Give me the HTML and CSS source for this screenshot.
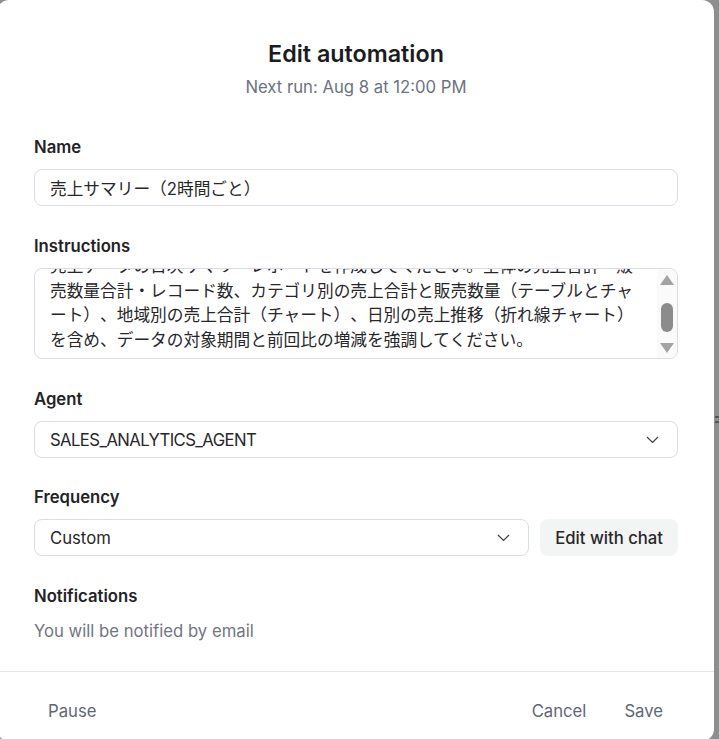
FILE: index.html
```html
<!DOCTYPE html>
<html lang="ja">
<head>
    <meta charset="UTF-8">
    <meta name="viewport" content="width=device-width, initial-scale=1.0">
    <title>Edit automation</title>
    <link rel="stylesheet" href="styles.css">
</head>
<body>
    <div class="modal">
        <div class="modal-body">
            <div class="modal-header">
                <h2 class="title">Edit automation</h2>
                <p class="subtitle">Next run: Aug 8 at 12:00 PM</p>
            </div>

            <div class="field">
                <label class="field-label" for="name">Name</label>
                <input class="text-input" id="name" type="text" value="売上サマリー（2時間ごと）">
            </div>

            <!-- Инструкции: текст прокручен, скроллбар рисуем сами -->
            <div class="field">
                <label class="field-label">Instructions</label>
                <div class="textarea">
                    <div class="textarea-text">売上データの日次サマリーレポートを作成してください。全体の売上合計・販売数量合計・レコード数、カテゴリ別の売上合計と販売数量（テーブルとチャート）、地域別の売上合計（チャート）、日別の売上推移（折れ線チャート）を含め、データの対象期間と前回比の増減を強調してください。</div>
                    <div class="scrollbar">
                        <svg class="arrow" width="14" height="10" viewBox="0 0 14 10"><path d="M7 0 L14 10 L0 10 Z" fill="#a3a3a3"/></svg>
                        <div class="thumb"></div>
                        <svg class="arrow" width="14" height="10" viewBox="0 0 14 10"><path d="M0 0 L14 0 L7 10 Z" fill="#a3a3a3"/></svg>
                    </div>
                </div>
            </div>

            <div class="field field-tight">
                <label class="field-label">Agent</label>
                <div class="select">
                    <span class="caps">SALES_ANALYTICS_AGENT</span>
                    <svg width="13" height="8" viewBox="0 0 13 8"><path d="M1 1 L6.5 6.5 L12 1" fill="none" stroke="#3f3f46" stroke-width="1.2"/></svg>
                </div>
            </div>

            <div class="field">
                <label class="field-label">Frequency</label>
                <div class="row">
                    <div class="select grow">
                        <span>Custom</span>
                        <svg width="13" height="8" viewBox="0 0 13 8"><path d="M1 1 L6.5 6.5 L12 1" fill="none" stroke="#3f3f46" stroke-width="1.2"/></svg>
                    </div>
                    <button class="chat-btn">Edit with chat</button>
                </div>
            </div>

            <div class="field">
                <label class="field-label label-wide">Notifications</label>
                <p class="hint">You will be notified by email</p>
            </div>
        </div>

        <div class="modal-footer">
            <button class="link-btn">Pause</button>
            <div class="footer-right">
                <button class="link-btn">Cancel</button>
                <button class="link-btn">Save</button>
            </div>
        </div>
    </div>
    <div class="resize-handle"></div>
</body>
</html>
```

FILE: styles.css
```css
* {
    box-sizing: border-box;
}

body {
    margin: 0;
    height: 739px;
    background: #8e8e8e;
    font-family: Inter, 'Noto Sans CJK JP', sans-serif;
    font-size: 16.7px;
    color: #1f1f23;
    text-spacing-trim: space-all;
    overflow: hidden;
    position: relative;
}

.modal {
    width: 717px;
    height: 741px;
    margin-left: -3px;
    background: #fff;
    border-radius: 12px;
    display: flex;
    flex-direction: column;
}

.modal-body {
    padding: 40px 36px 0 37px;
}

.modal-header {
    text-align: center;
    margin-bottom: 37px;
}

.title {
    margin: 0;
    font-size: 23.3px;
    line-height: 28px;
    font-weight: 600;
    color: #1c1c1f;
}

.subtitle {
    margin: 8px 0 0;
    font-size: 16.7px;
    line-height: 22px;
    color: #6b7280;
}

.field {
    margin-bottom: 28px;
}

.field-tight {
    margin-bottom: 27px;
}

.field-label {
    display: block;
    line-height: 24px;
    font-weight: 600;
    margin-bottom: 10px;
    color: #232326;
}

.label-wide {
    margin-bottom: 11px;
}

.text-input {
    display: block;
    width: 100%;
    height: 37px;
    padding: 0 15px;
    border: 1px solid #dadde5;
    border-radius: 8px;
    font: inherit;
    color: #27272a;
    outline: none;
}

.textarea {
    display: flex;
    height: 91px;
    border: 1px solid #dadde5;
    border-radius: 8px;
    overflow: hidden;
}

.textarea-text {
    flex: 1;
    padding: 0 16px 0 15px;
    margin-top: -15px;
    line-height: 24.5px;
    color: #27272a;
}

.scrollbar {
    width: 20px;
    flex: none;
    background: #fafafa;
    display: flex;
    flex-direction: column;
    align-items: center;
    padding-top: 6px;
}

.arrow {
    display: block;
}

.thumb {
    width: 12px;
    height: 29px;
    margin: 18px 0 11px;
    border-radius: 6px;
    background: #8c8c8c;
}

.select {
    display: flex;
    align-items: center;
    justify-content: space-between;
    height: 37px;
    padding: 0 18px 0 15px;
    border: 1px solid #dadde5;
    border-radius: 8px;
    color: #27272a;
}

.caps {
    letter-spacing: -0.6px;
}

.row {
    display: flex;
    gap: 11px;
}

.grow {
    flex: 1;
}

.chat-btn {
    height: 37px;
    padding: 0 15px;
    border: none;
    border-radius: 8px;
    background: #f3f4f4;
    font: inherit;
    font-weight: 500;
    color: #27272a;
    cursor: pointer;
}

.hint {
    margin: 0;
    line-height: 24px;
    color: #71757f;
}

.modal-footer {
    border-top: 1px solid #e5e7eb;
    display: flex;
    justify-content: space-between;
    padding: 19px 37px 0 37px;
}

.footer-right {
    display: flex;
    gap: 10px;
}

.link-btn {
    height: 40px;
    padding: 0 14px;
    border: none;
    background: none;
    font: inherit;
    color: #5f6676;
    cursor: pointer;
}

/* ручка ресайза панели за модалкой */
.resize-handle {
    position: absolute;
    right: 0;
    top: 416px;
    width: 4px;
    height: 7px;
    border-top: 2px solid #555;
    border-bottom: 2px solid #555;
}
```
